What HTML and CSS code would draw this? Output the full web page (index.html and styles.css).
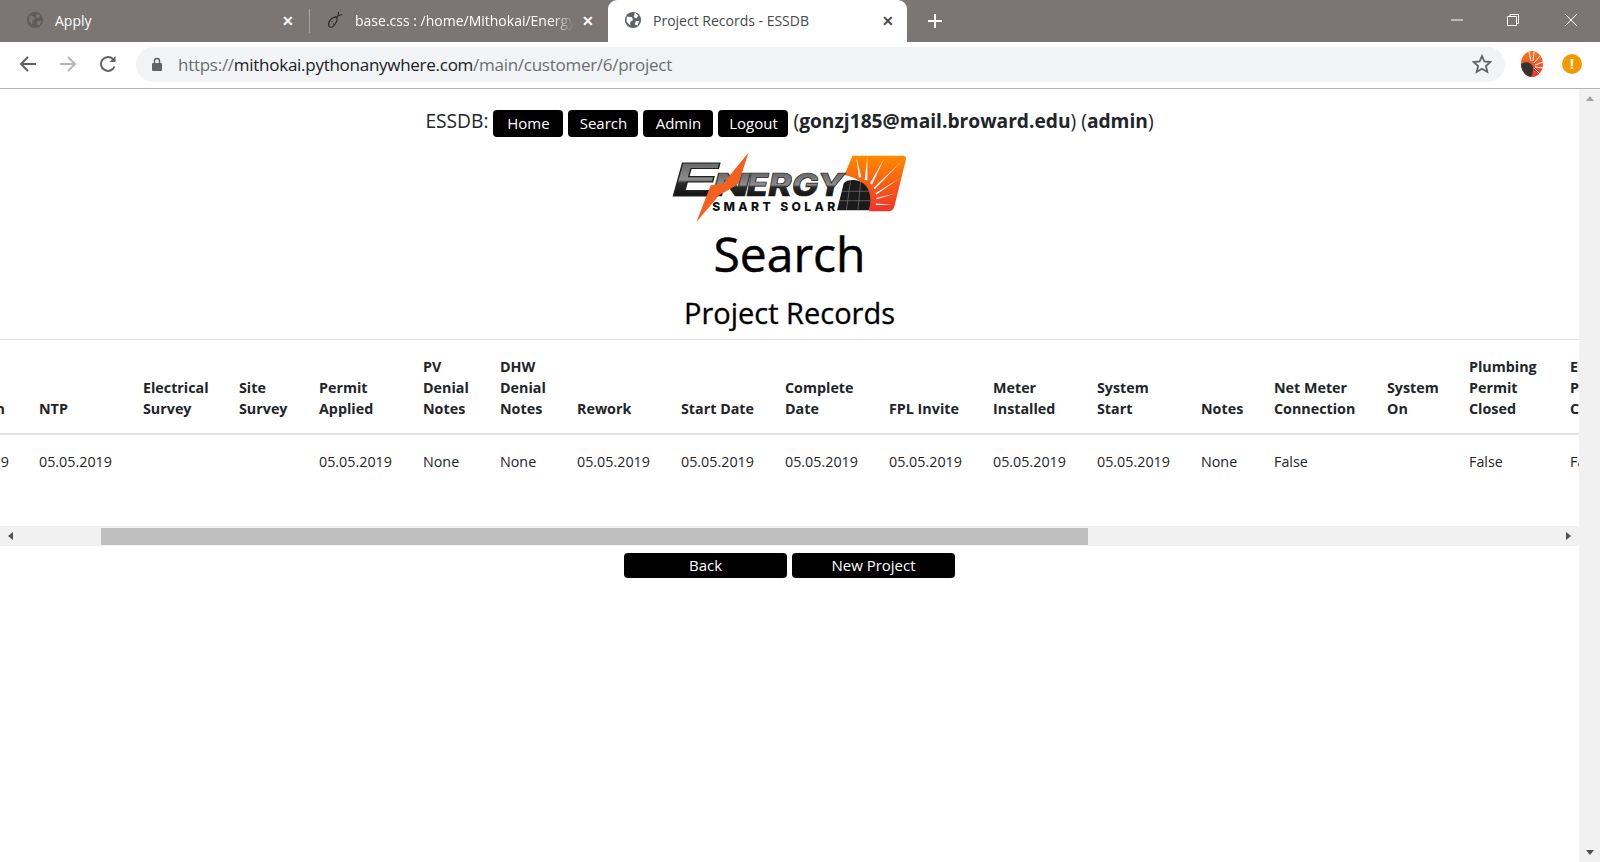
FILE: index.html
```html
<!DOCTYPE html>
<html lang="en">
  <head>
    <meta charset="UTF-8" />
    <meta name="viewport" content="width=device-width, initial-scale=1.0" />
    <title>Project Records - ESSDB</title>
    <link rel="stylesheet" href="styles.css">
  </head>
  <body>
    <div class="tabstrip">
      <div class="tab tab-first">
        <svg class="favicon" viewBox="0 0 20 20"><circle cx="10" cy="10" r="9" fill="#5f5d5c"/><path d="M4 5l5 1 1 3-3 2v4L3 11zM12 3l4 2-2 3-3-1zM13 11l4 0-2 5-3-1z" fill="#7b7574"/></svg>
        <span class="tab-title">Apply</span>
        <span class="tab-close">&#10005;</span>
      </div>
      <div class="tab-sep"></div>
      <div class="tab tab-second">
        <svg class="favicon" viewBox="0 0 20 20"><path d="M14 1l-1 6M10 6l8-2M12 7C7 6 2 11 3 16c0 2 3 3 5 1 3-3 5-6 4-10z" fill="none" stroke="#2b2b2b" stroke-width="1.2"/><path d="M6 12l1 0M8 15l1-1" stroke="#2b2b2b" stroke-width="1.2"/></svg>
        <span class="tab-title tab-fade">base.css : /home/Mithokai/EnergySmart/</span>
        <span class="tab-close">&#10005;</span>
      </div>
      <div class="tab tab-active">
        <svg class="favicon" viewBox="0 0 20 20"><circle cx="10" cy="10" r="9" fill="#5f6368"/><path d="M3 6l6 1 1 3-3 2v4L3 12zM12 2l4 3-2 3-3-1zM13 11l4 0-2 5-3-1z" fill="#fff"/></svg>
        <span class="tab-title">Project Records - ESSDB</span>
        <span class="tab-close">&#10005;</span>
      </div>
      <svg class="new-tab" viewBox="0 0 16 16"><path d="M8 1v14M1 8h14" stroke="#fff" stroke-width="2"/></svg>
      <div class="win-controls">
        <svg viewBox="0 0 14 14"><path d="M1 7h12" stroke="#fff"/></svg>
        <svg viewBox="0 0 14 14"><path d="M1.500 3.500h9v9h-9zM4 3.500v-2h8.500v9h-2" fill="none" stroke="#fff"/></svg>
        <svg class="win-close" viewBox="0 0 14 14"><path d="M1 1l12 12M13 1L1 13" stroke="#fff"/></svg>
      </div>
    </div>

    <div class="toolbar">
      <svg class="nav-icon" viewBox="0 0 18 18"><path d="M17 9H2M9 2L2 9l7 7" fill="none" stroke="#5f6368" stroke-width="2"/></svg>
      <svg class="nav-icon" viewBox="0 0 18 18"><path d="M1 9h15M9 2l7 7-7 7" fill="none" stroke="#b5b7ba" stroke-width="2"/></svg>
      <svg class="nav-icon" viewBox="0 0 18 18"><path d="M15.500 11.500A7 7 0 1 1 14 4" fill="none" stroke="#5f6368" stroke-width="2"/><path d="M16.500 1v6h-6z" fill="#5f6368"/></svg>
      <div class="omnibox">
        <svg class="lock" viewBox="0 0 12 14"><rect x="1" y="6" width="10" height="8" rx="1" fill="#5f6368"/><path d="M3.500 6V4a2.500 2.500 0 0 1 5 0v2" fill="none" stroke="#5f6368" stroke-width="1.500"/></svg>
        <span class="url"><span class="url-scheme">https://</span><span class="url-host">mithokai.pythonanywhere.com</span><span class="url-scheme">/main/customer/6/project</span></span>
        <svg class="star" viewBox="0 0 20 20"><path d="M10 2l2.400 5.500 6 .5-4.500 4 1.400 6L10 14.800 4.700 18l1.400-6-4.500-4 6-.5z" fill="none" stroke="#5f6368" stroke-width="1.800"/></svg>
      </div>
      <svg class="ext-icon" viewBox="0 0 26 26">
        <defs>
          <linearGradient id="extsun" x1="0" y1="0" x2="0" y2="1">
            <stop offset="0" stop-color="#f57a1c"/>
            <stop offset="1" stop-color="#f0322c"/>
          </linearGradient>
        </defs>
        <ellipse cx="13" cy="13" rx="11" ry="13" fill="url(#extsun)"/>
        <path d="M10 1l2 9M15 1l-1 9M21 5l-6 7M24 11l-8 3M24 17l-8-1M21 23l-6-6" stroke="#fff" stroke-width="1"/>
        <path d="M2 13c4-3 9-2 11 1 2 4 1 8-1 12C6 25 2 19 2 13z" fill="#333"/>
      </svg>
      <div class="alert-badge">!</div>
    </div>

    <div class="viewport">
      <div class="page">
        <div class="topnav">
          <span>ESSDB:</span>
          <a class="btn">Home</a>
          <a class="btn">Search</a>
          <a class="btn">Admin</a>
          <a class="btn">Logout</a>
          <span>(<b>gonzj185@mail.broward.edu</b>) (<b>admin</b>)</span>
        </div>

        <svg class="logo" viewBox="0 0 800 237">
          <defs>
            <linearGradient id="metal" x1="0" y1="0" x2="0" y2="1">
              <stop offset="0" stop-color="#555"/>
              <stop offset="0.5" stop-color="#8c8c8c"/>
              <stop offset="0.56" stop-color="#2a2a2a"/>
              <stop offset="1" stop-color="#000"/>
            </linearGradient>
            <linearGradient id="flame" x1="0" y1="0" x2="0" y2="1">
              <stop offset="0" stop-color="#ff8a00"/>
              <stop offset="1" stop-color="#f0322c"/>
            </linearGradient>
          </defs>
          <path d="M606 35H755Q767 35 764 47L730 185Q726 199 712 199H655C662 150 650 105 582 92z" fill="url(#flame)"/>
          <path d="M625 100L617 38L632 98zM642 106L650 38L650 108zM658 116L700 42L664 120zM668 130L752 50L672 134zM674 146L748 100L676 150zM676 160L735 146L677 164zM675 176L725 180L675 181z" fill="#fff"/>
          <path d="M560 196L580 116Q590 106 610 107C645 110 668 140 655 196z" fill="#1b1b1b"/>
          <path d="M575 140H660M568 168H658M600 108L588 196M630 112L622 196" stroke="#777" stroke-width="2" fill="none"/>
          <text class="logo-big" x="72" y="155" textLength="136" lengthAdjust="spacingAndGlyphs" fill="url(#metal)">E</text>
          <text class="logo-word" x="190" y="155" textLength="110" lengthAdjust="spacingAndGlyphs" fill="url(#metal)">N</text>
          <text class="logo-word" x="292" y="155" textLength="288" lengthAdjust="spacingAndGlyphs" fill="url(#metal)">ERGY</text>
          <path d="M298 25L268 118L232 140L212 150L143 232L186 122L222 118z" fill="#f4601f"/>
          <text class="logo-small" x="190" y="199" textLength="365">SMART SOLAR</text>
        </svg>

        <h1 class="title">Search</h1>
        <h2 class="subtitle">Project Records</h2>

        <div class="table-clip">
          <table class="records">
            <colgroup>
              <col class="w103"><col class="w104"><col class="w96"><col class="w80"><col class="w104"><col class="w77"><col class="w77"><col class="w104"><col class="w104"><col class="w104"><col class="w104"><col class="w104"><col class="w104"><col class="w73"><col class="w113"><col class="w82"><col class="w101"><col class="w104">
            </colgroup>
            <thead>
              <tr>
                <th class="cut-col">Submission</th>
                <th>NTP</th>
                <th>Electrical<br>Survey</th>
                <th>Site<br>Survey</th>
                <th>Permit<br>Applied</th>
                <th>PV<br>Denial<br>Notes</th>
                <th>DHW<br>Denial<br>Notes</th>
                <th>Rework</th>
                <th>Start Date</th>
                <th>Complete<br>Date</th>
                <th>FPL Invite</th>
                <th>Meter<br>Installed</th>
                <th>System<br>Start</th>
                <th>Notes</th>
                <th>Net Meter<br>Connection</th>
                <th>System<br>On</th>
                <th>Plumbing<br>Permit<br>Closed</th>
                <th>Electrical<br>Permit<br>Closed</th>
              </tr>
            </thead>
            <tbody>
              <tr>
                <td>05.05.2019</td>
                <td>05.05.2019</td>
                <td></td>
                <td></td>
                <td>05.05.2019</td>
                <td>None</td>
                <td>None</td>
                <td>05.05.2019</td>
                <td>05.05.2019</td>
                <td>05.05.2019</td>
                <td>05.05.2019</td>
                <td>05.05.2019</td>
                <td>05.05.2019</td>
                <td>None</td>
                <td>False</td>
                <td></td>
                <td>False</td>
                <td>False</td>
              </tr>
            </tbody>
          </table>
        </div>

        <div class="hscroll">
          <span class="arrow-left"></span>
          <div class="hthumb"></div>
          <span class="arrow-right"></span>
        </div>

        <div class="actions">
          <a class="btn btn-wide">Back</a>
          <a class="btn btn-wide">New Project</a>
        </div>
      </div>
      <div class="vscroll">
        <span class="arrow-up"></span>
        <span class="arrow-down"></span>
      </div>
    </div>
  </body>
</html>
```

FILE: styles.css
```css
* {
  box-sizing: border-box;
}
html,
body {
  height: 100%;
}
body {
  margin: 0;
  display: flex;
  flex-direction: column;
  overflow: hidden;
  font-family: "Open Sans", "Liberation Sans", sans-serif;
  color: #212529;
  background-color: #fff;
}

/* browser chrome */
.tabstrip {
  display: flex;
  align-items: flex-end;
  height: 42px;
  padding-left: 8px;
  background-color: #7b7574;
}
.tab {
  display: flex;
  align-items: center;
  height: 42px;
  padding-bottom: 2px;
  font-size: 14px;
}
.tab-first {
  width: 301px;
  padding-left: 18px;
  padding-right: 15px;
}
.tab-second {
  width: 298px;
  padding-left: 16px;
  padding-right: 14px;
}
.tab-active {
  width: 299px;
  padding-left: 16px;
  padding-right: 13px;
  background-color: #fff;
  border-radius: 9px 9px 0 0;
}
.tab-sep {
  width: 1px;
  height: 24px;
  margin-bottom: 9px;
  background-color: #aaa5a4;
}
.favicon {
  flex: none;
  width: 18px;
  height: 18px;
}
.tab-title {
  flex: 1;
  margin-left: 11px;
  overflow: hidden;
  white-space: nowrap;
  color: #fff;
}
.tab-second .tab-title {
  color: #fff;
  -webkit-mask-image: linear-gradient(to right, #000 90%, transparent);
  mask-image: linear-gradient(to right, #000 90%, transparent);
}
.tab-active .tab-title {
  color: #45494d;
}
.tab-close {
  margin-left: 8px;
  font-size: 14px;
  font-weight: 700;
  color: #fff;
}
.tab-active .tab-close {
  color: #45494d;
}
.new-tab {
  width: 16px;
  height: 16px;
  margin: 0 0 13px 20px;
}
.win-controls {
  display: flex;
  gap: 42px;
  margin-left: auto;
  margin-right: 22px;
  margin-bottom: 15px;
}
.win-controls svg {
  width: 14px;
  height: 14px;
}
.win-controls .win-close {
  margin-left: 2px;
}
.toolbar {
  display: flex;
  align-items: center;
  height: 47px;
  padding-left: 19px;
  padding-bottom: 2px;
  background-color: #fff;
  border-bottom: 1px solid #b5b5b5;
}
.nav-icon {
  width: 18px;
  height: 18px;
  margin-right: 22px;
}
.omnibox {
  display: flex;
  align-items: center;
  width: 1369px;
  height: 35px;
  margin-left: -3px;
  padding: 0 13px 0 15px;
  border-radius: 18px;
  background-color: #f1f3f4;
}
.lock {
  width: 12px;
  height: 14px;
}
.url {
  flex: 1;
  margin-left: 15px;
  font-size: 17px;
  letter-spacing: -0.27px;
  color: #6b6f73;
}
.url-host {
  color: #202124;
}
.star {
  width: 20px;
  height: 20px;
}
.ext-icon {
  width: 26px;
  height: 26px;
  margin-left: 14px;
}
.alert-badge {
  width: 20px;
  height: 20px;
  margin-left: 17px;
  border-radius: 50%;
  background-color: #f29900;
  color: #fff;
  font-size: 14px;
  font-weight: 700;
  line-height: 20px;
  text-align: center;
}

/* page */
.viewport {
  display: flex;
  flex: 1;
  min-height: 0;
}
.page {
  flex: 1;
  min-width: 0;
  display: flex;
  flex-direction: column;
  align-items: center;
  padding-top: 21px;
}
.topnav {
  display: flex;
  align-items: center;
  gap: 5px;
  height: 27px;
  font-size: 19.2px;
  white-space: nowrap;
}
.topnav span:first-child {
  margin-top: -6px;
}
.topnav span:last-child {
  margin-top: -6px;
}
.btn {
  display: block;
  width: 70px;
  height: 27px;
  border-radius: 4px;
  background-color: #000;
  color: #fff;
  font-size: 15px;
  line-height: 27px;
  text-align: center;
}
.logo {
  width: 270px;
  height: 80px;
  margin: 7px 14px 0 0;
}
.title {
  margin: -1px 0 0;
  font-size: 48px;
  font-weight: 400;
  line-height: 62px;
  color: #000;
  -webkit-text-stroke: 0.5px #000;
}
.subtitle {
  margin: 8px 0 6px;
  font-size: 29px;
  font-weight: 400;
  line-height: 40px;
  color: #000;
  -webkit-text-stroke: 0.3px #000;
}
.logo-big {
  font-family: "Liberation Sans", sans-serif;
  font-size: 140px;
  font-weight: 700;
  font-style: italic;
  stroke: #222;
  stroke-width: 3px;
}
.logo-word {
  font-family: "Inter", "Liberation Sans", sans-serif;
  font-size: 92px;
  font-weight: 800;
  font-style: italic;
  stroke: #222;
  stroke-width: 2px;
}
.logo-small {
  font-family: "Inter", "Liberation Sans", sans-serif;
  font-size: 36px;
  font-weight: 800;
  fill: #111;
}

/* table */
.table-clip {
  width: 100%;
  height: 187px;
  overflow: hidden;
  border-top: 1px solid #dee2e6;
}
.records {
  table-layout: fixed;
  width: 1715px;
  margin-left: -79px;
  border-collapse: collapse;
  font-size: 14.3px;
  line-height: 21px;
}
.w73 { width: 73px; }
.w77 { width: 77px; }
.w80 { width: 80px; }
.w82 { width: 82px; }
.w96 { width: 96px; }
.w101 { width: 101px; }
.w103 { width: 103px; }
.w104 { width: 104px; }
.w113 { width: 113px; }
.records th {
  height: 94px;
  padding: 0 15px 14px;
  vertical-align: bottom;
  text-align: left;
  white-space: nowrap;
  border-bottom: 2px solid #dee2e6;
}
.records .cut-col {
  letter-spacing: -1.4px;
}
.records td {
  padding: 16px 15px 0;
  vertical-align: top;
  white-space: nowrap;
}
.hscroll {
  display: flex;
  align-items: center;
  width: 100%;
  height: 20px;
  background-color: #f1f1f1;
}
.hthumb {
  width: 987px;
  height: 17px;
  margin-left: 88px;
  background-color: #bfbfbf;
}
.arrow-left {
  width: 0;
  height: 0;
  margin-left: 8px;
  border: 4px solid transparent;
  border-left: 0;
  border-right: 5px solid #505050;
}
.arrow-right {
  width: 0;
  height: 0;
  margin-left: auto;
  margin-right: 8px;
  border: 4px solid transparent;
  border-right: 0;
  border-left: 5px solid #505050;
}
.actions {
  display: flex;
  gap: 5px;
  margin-top: 7px;
}
.btn-wide {
  width: 163px;
  height: 25px;
  line-height: 25px;
}
.vscroll {
  display: flex;
  flex-direction: column;
  justify-content: space-between;
  align-items: center;
  width: 21px;
  padding: 7px 0;
  background-color: #f1f1f1;
}
.arrow-up {
  width: 0;
  height: 0;
  border: 4px solid transparent;
  border-top: 0;
  border-bottom: 5px solid #a3a3a3;
}
.arrow-down {
  width: 0;
  height: 0;
  border: 4px solid transparent;
  border-bottom: 0;
  border-top: 5px solid #505050;
}
```
